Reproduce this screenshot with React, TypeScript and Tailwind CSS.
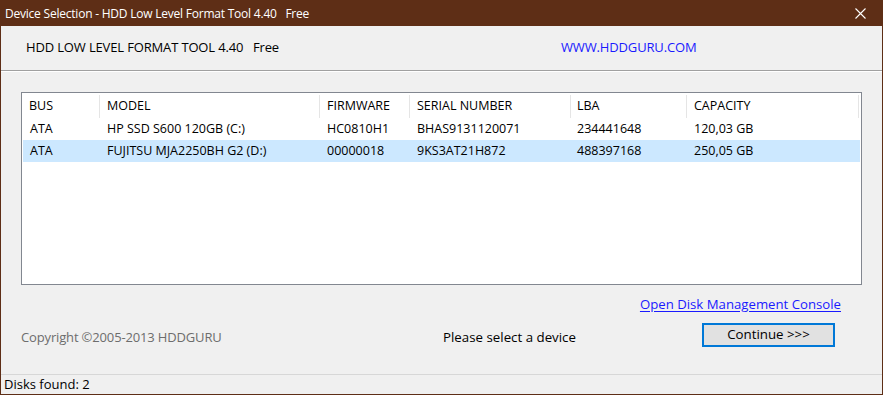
import React from "react";

const font = { fontFamily: '"Open Sans", "Noto Sans", sans-serif' };

const cols = [
  { label: "BUS", w: 78 },
  { label: "MODEL", w: 220 },
  { label: "FIRMWARE", w: 90 },
  { label: "SERIAL NUMBER", w: 161 },
  { label: "LBA", w: 116 },
  { label: "CAPACITY", w: 172 },
];

const rows = [
  ["ATA", "HP SSD S600 120GB (C:)", "HC0810H1", "BHAS9131120071", "234441648", "120,03 GB"],
  ["ATA", "FUJITSU MJA2250BH G2 (D:)", "00000018", "9KS3AT21H872", "488397168", "250,05 GB"],
];

export default function App() {
  return (
    <div
      className="w-[883px] h-[395px] border border-[#5e2e16] bg-[#f0f0f0] flex flex-col box-border overflow-hidden text-[12px] text-black"
      style={font}
    >
      {/* Title bar */}
      <div className="h-[25px] bg-[#5e2e16] flex items-center justify-between text-white shrink-0">
        <div className="pl-[4px] tracking-[-0.22px]">
          Device Selection - HDD Low Level Format Tool 4.40&nbsp;&nbsp;&nbsp;Free
        </div>
        <div className="w-[46px] h-[25px] flex items-center justify-center mr-[-1px]">
          <svg width="11" height="11" viewBox="0 0 11 11">
            <path d="M0.5 0.5 L10.5 10.5 M10.5 0.5 L0.5 10.5" stroke="white" strokeWidth="1.1" />
          </svg>
        </div>
      </div>

      {/* Header */}
      <div className="h-[44px] flex items-center shrink-0 text-[13px] tracking-[-0.15px]">
        <div className="pl-[25px] w-[560px]">
          HDD LOW LEVEL FORMAT TOOL 4.40&nbsp;&nbsp;&nbsp;Free
        </div>
        <div className="text-[#1a1aff]">WWW.HDDGURU.COM</div>
      </div>
      <div className="h-px bg-[#a0a0a0] shrink-0" />
      <div className="h-px bg-white shrink-0" />

      {/* Content */}
      <div className="flex-1 flex flex-col pl-[20px] pr-[20px]">
        <div className="mt-[20px] w-[841px] h-[193px] border border-[#828790] bg-white text-[12.5px]">
          <div className="flex h-[25px] items-center pt-[2px]">
            {cols.map((c, i) => (
              <div
                key={c.label}
                className={
                  "h-full flex items-center border-r border-[#e5e5e5] " +
                  (i === 4 ? "pl-[6px]" : "pl-[7px]")
                }
                style={{ width: c.w }}
              >
                {c.label}
              </div>
            ))}
          </div>
          {rows.map((r, ri) => (
            <div
              key={ri}
              className={"flex h-[22px] items-center mx-px " + (ri === 1 ? "bg-[#cce8ff]" : "")}
            >
              {r.map((cell, ci) => (
                <div
                  key={ci}
                  className={ci === 4 ? "pl-[6px]" : "pl-[7px]"}
                  style={{ width: ci === 0 ? cols[ci].w - 1 : cols[ci].w }}
                >
                  {cell}
                </div>
              ))}
            </div>
          ))}
        </div>

        <div className="flex justify-end pr-[21px] mt-[10px] h-[19px] items-center">
          <span className="text-[#1a1aff] underline underline-offset-[2px] text-[13.2px]">
            Open Disk Management Console
          </span>
        </div>

        <div className="flex items-center mt-[9px] h-[24px]">
          <div className="w-[422px] text-[#6d6d6d] text-[13px] tracking-[-0.15px] mt-[6px]">
            Copyright ©2005-2013 HDDGURU
          </div>
          <div className="w-[259px] text-[13.3px] mt-[6px]">Please select a device</div>
          <div className="w-[133px] h-[24px] border-2 border-[#0078d7] bg-[#e1e1e1] flex items-center justify-center text-[13.3px]">
            Continue &gt;&gt;&gt;
          </div>
        </div>
      </div>

      {/* Status bar */}
      <div className="h-px bg-[#d7d7d7] shrink-0" />
      <div className="h-[19px] flex items-center pl-[3px] shrink-0 text-[13px]">
        Disks found: 2
      </div>
    </div>
  );
}
